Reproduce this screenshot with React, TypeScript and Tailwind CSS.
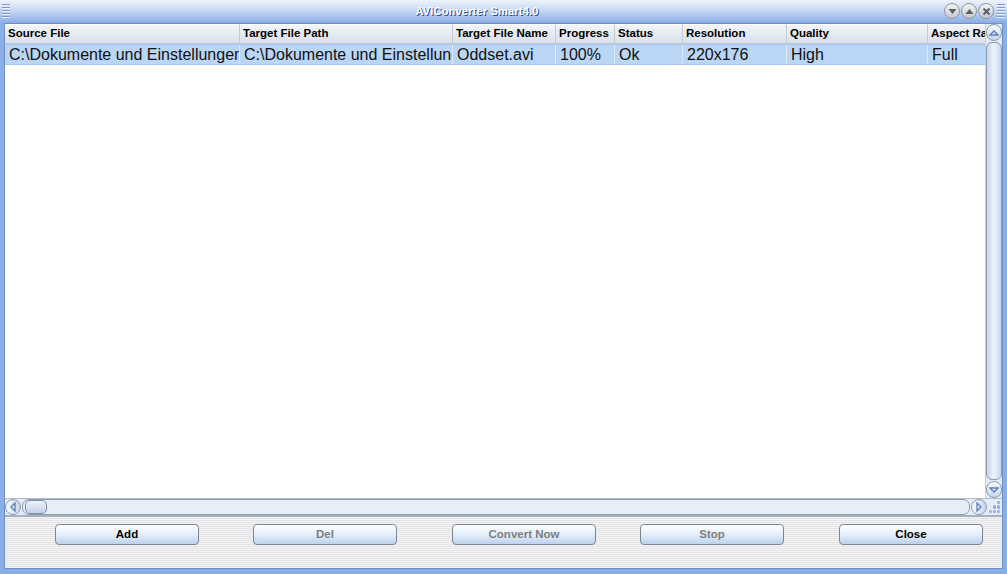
import React from "react";

const cols = [
  { name: "Source File", w: 235, v: "C:\\Dokumente und Einstellungen" },
  { name: "Target File Path", w: 213, v: "C:\\Dokumente und Einstellungen" },
  { name: "Target File Name", w: 103, v: "Oddset.avi" },
  { name: "Progress", w: 59, v: "100%" },
  { name: "Status", w: 68, v: "Ok" },
  { name: "Resolution", w: 104, v: "220x176" },
  { name: "Quality", w: 141, v: "High" },
  { name: "Aspect Ratio", w: 70, v: "Full" },
];

function RoundBtn({ children }: { children: React.ReactNode }) {
  return (
    <div className="w-[16px] h-[16px] rounded-full border border-[#8f97a3] bg-gradient-to-b from-[#f4f4f4] to-[#c4c8ce] flex items-center justify-center">
      {children}
    </div>
  );
}

function Grip() {
  return (
    <div className="flex flex-col gap-[1px] w-[8px]">
      {[0, 1, 2, 3, 4].map((i) => (
        <div key={i} className="h-[2px] border-t border-[#7b9bd4] border-b-[#eef3fc] border-b" />
      ))}
    </div>
  );
}

function Button({ label, disabled, className }: { label: string; disabled?: boolean; className?: string }) {
  return (
    <div
      className={`w-[144px] h-[21px] shrink-0 rounded-[4px] border border-[#7c8796] bg-gradient-to-b from-[#ffffff] via-[#e4eefa] to-[#bcd2ee] flex items-center justify-center text-[11.5px] font-bold ${
        disabled ? "text-[#7e7e7e]" : "text-black"
      } ${className ?? ""}`}
    >
      {label}
    </div>
  );
}

export default function App() {
  return (
    <div
      className="w-[1007px] h-[574px] flex flex-col bg-[#8aaee6] overflow-hidden"
      style={{ fontFamily: '"Liberation Sans", Arial, sans-serif' }}
    >
      {/* Title bar */}
      <div className="h-[22px] shrink-0 flex items-center px-[2px] bg-gradient-to-b from-[#eef3fb] via-[#c5d6f2] to-[#8fb0e8] relative">
        <Grip />
        <div className="flex-1 text-center text-[11px] font-bold text-white tracking-[0.2px] [text-shadow:1px_1px_0_#2a4f9a]">
          AVIConverter Smart4.0
        </div>
        <div className="flex items-center gap-[1px] mr-[3px]">
          <RoundBtn>
            <svg width="9" height="7" viewBox="0 0 9 7"><path d="M0.5 1h8L4.5 6z" fill="#5a5f66" /></svg>
          </RoundBtn>
          <RoundBtn>
            <svg width="9" height="7" viewBox="0 0 9 7"><path d="M0.5 6h8L4.5 1z" fill="#5a5f66" /></svg>
          </RoundBtn>
          <RoundBtn>
            <svg width="9" height="9" viewBox="0 0 9 9"><path d="M1.5 1.5l6 6M7.5 1.5l-6 6" stroke="#5a5f66" strokeWidth="2" /></svg>
          </RoundBtn>
        </div>
        <Grip />
      </div>

      {/* Body */}
      <div className="flex-1 flex flex-col mx-[4px] mt-[1px] mb-[5px] bg-white border border-[#6f8fc8]">
        {/* Table area */}
        <div className="flex-1 flex min-h-0">
          <div className="flex-1 flex flex-col min-w-0 overflow-hidden">
            {/* header */}
            <div className="flex h-[20px] shrink-0">
              {cols.map((c) => (
                <div
                  key={c.name}
                  style={{ width: c.w }}
                  className="shrink-0 h-full border-r border-b border-[#c3cad4] border-t border-t-white bg-gradient-to-b from-[#f2f5f9] to-[#d9e0ea] text-[11.5px] font-bold text-black flex items-center pl-[3px] whitespace-nowrap overflow-hidden"
                >
                  {c.name}
                </div>
              ))}
            </div>
            {/* row */}
            <div className="flex h-[21px] shrink-0">
              {cols.map((c) => (
                <div
                  key={c.name}
                  style={{ width: c.w }}
                  className="shrink-0 h-full bg-[#b9d6f6] border-r border-[#dce9f8] border-t border-t-[#a5c6ee] border-b border-b-[#a5c6ee] text-[16px] text-[#111] flex items-center pl-[4px] whitespace-nowrap overflow-hidden"
                >
                  {c.v}
                </div>
              ))}
            </div>
            <div className="flex-1" />
          </div>
          {/* vertical scrollbar */}
          <div className="w-[17px] shrink-0 flex flex-col bg-[#e6ecf6] border-l border-[#c7d1de]">
            <div className="h-[17px] w-[16px] rounded-full border border-[#8b9bb3] bg-gradient-to-b from-[#f8fbff] to-[#c6d6ee] flex items-center justify-center">
              <svg width="10" height="6" viewBox="0 0 10 6"><path d="M1 5L5 1l4 4z" fill="none" stroke="#5f7fb6" strokeWidth="1.3" /></svg>
            </div>
            <div className="flex-1 mx-[0px] my-[1px] rounded-[6px] border border-[#8b9bb3] bg-gradient-to-r from-[#c7d6ec] via-[#eef3fb] to-[#c7d6ec]" />
            <div className="h-[17px] w-[16px] rounded-full border border-[#8b9bb3] bg-gradient-to-b from-[#f8fbff] to-[#c6d6ee] flex items-center justify-center">
              <svg width="10" height="6" viewBox="0 0 10 6"><path d="M1 1l4 4 4-4z" fill="none" stroke="#5f7fb6" strokeWidth="1.3" /></svg>
            </div>
          </div>
        </div>
        {/* horizontal scrollbar */}
        <div className="h-[17px] shrink-0 flex items-center bg-[#e6ecf6] border-t border-[#b0bccd]">
          <div className="w-[16px] h-[16px] rounded-full border border-[#8b9bb3] bg-gradient-to-r from-[#f8fbff] to-[#c6d6ee] flex items-center justify-center">
            <svg width="6" height="10" viewBox="0 0 6 10"><path d="M5 1L1 5l4 4z" fill="none" stroke="#5f7fb6" strokeWidth="1.3" /></svg>
          </div>
          <div className="flex-1 h-[16px] mx-[1px] rounded-[7px] border border-[#8b9bb3] bg-[#e8eef8] flex items-center">
            <div className="w-[22px] h-[14px] ml-[2px] rounded-[5px] border border-[#7f8fa8] bg-gradient-to-b from-[#eef3fb] to-[#c3d3ec]" />
          </div>
          <div className="w-[16px] h-[16px] rounded-full border border-[#8b9bb3] bg-gradient-to-r from-[#f8fbff] to-[#c6d6ee] flex items-center justify-center">
            <svg width="6" height="10" viewBox="0 0 6 10"><path d="M1 1l4 4-4 4z" fill="none" stroke="#5f7fb6" strokeWidth="1.3" /></svg>
          </div>
          <div className="w-[15px] h-[16px] grid grid-cols-3 grid-rows-3 p-[2px] gap-[1px]">
            <span />
            <span />
            <span className="rounded-full bg-[#8fb0e0]" />
            <span />
            <span className="rounded-full bg-[#8fb0e0]" />
            <span className="rounded-full bg-[#8fb0e0]" />
            <span className="rounded-full bg-[#8fb0e0]" />
            <span className="rounded-full bg-[#8fb0e0]" />
            <span className="rounded-full bg-[#8fb0e0]" />
          </div>
        </div>
        {/* button panel */}
        <div className="h-[53px] shrink-0 border-t-2 border-[#a8b0bc] bg-[repeating-linear-gradient(to_bottom,#f3f3f3_0px,#f3f3f3_1px,#e4e4e6_1px,#e4e4e6_2px)] flex items-start pt-[7px] pl-[50px]">
          <Button label="Add" />
          <Button label="Del" disabled className="ml-[54px]" />
          <Button label="Convert Now" disabled className="ml-[55px]" />
          <Button label="Stop" disabled className="ml-[44px]" />
          <Button label="Close" className="ml-[55px]" />
        </div>
      </div>
    </div>
  );
}
